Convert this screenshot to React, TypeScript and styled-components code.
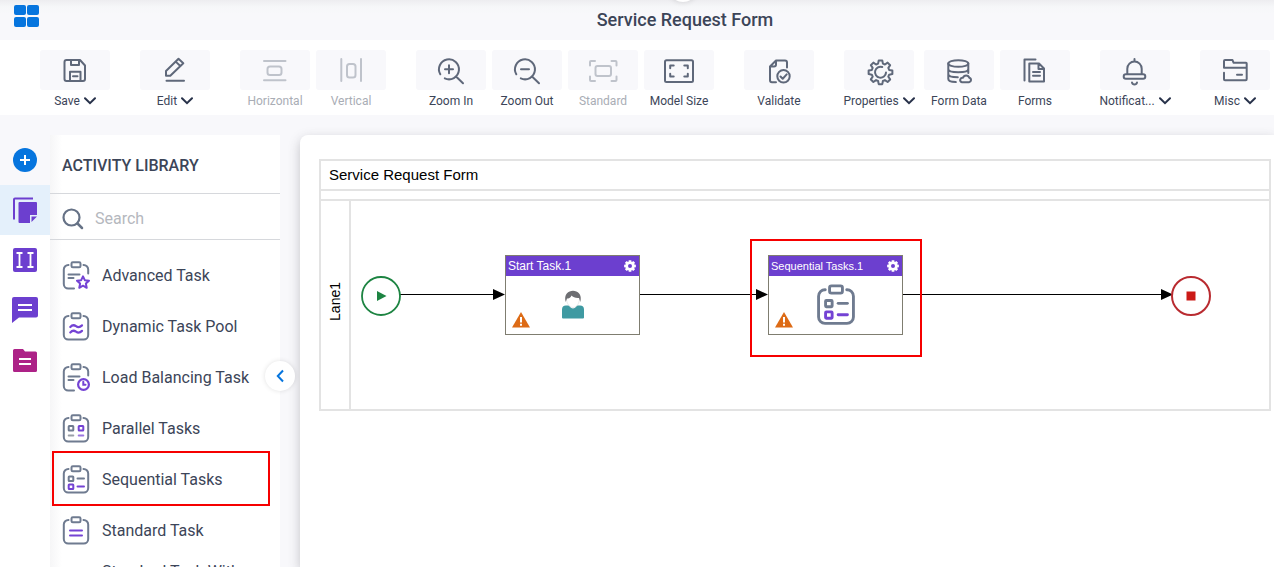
import React from "react";
import styled, { createGlobalStyle, css } from "styled-components";

const color = {
  ink: "#3c4558",
  icon: "#5f687a",
  muted: "#a9adb5",
  mutedIcon: "#bfc3cb",
  blue: "#0675de",
  purple: "#6c3fcf",
  magenta: "#ad2287",
  page: "#f8f8fb",
  rule: "#d6d8dc",
  frame: "#e3e3e3",
  mark: "#f60000",
};

const GlobalStyle = createGlobalStyle`
  * { box-sizing: border-box; }
  body { margin: 0; background: #fff; font-family: Roboto, "Liberation Sans", sans-serif; color: ${color.ink}; }
  button { font: inherit; color: inherit; border: 0; padding: 0; background: none; cursor: pointer; }
`;

const Page = styled.div`
  height: 100vh;
  display: flex;
  flex-direction: column;
  overflow: hidden;
  background: ${color.page};
`;

const Header = styled.header`
  position: relative;
  flex: none;
  height: 40px;
  display: grid;
  grid-template-columns: 1fr auto 1fr;
  padding: 0 14px;
  margin-right: -96px;
  background: linear-gradient(#ededf0, #f6f7f9 7px, ${color.page} 14px);
`;

const Title = styled.h1`
  margin: 0;
  font-size: 18px;
  line-height: 40px;
  font-weight: 500;
`;

const AppsButton = styled.button`
  justify-self: start;
  align-self: start;
  margin-top: 5px;
  display: grid;
  grid-template-columns: 12px 12px;
  grid-auto-rows: 10px;
  gap: 2px 1px;
  span { background: ${color.blue}; border-radius: 2px; }
`;

const PullTab = styled.span`
  position: absolute;
  top: -28px;
  left: 50%;
  width: 30px;
  height: 30px;
  margin-left: -17px;
  border-radius: 50%;
  background: #fff;
  box-shadow: 0 1px 5px rgba(0, 0, 0, 0.1);
`;

const Toolbar = styled.nav`
  flex: none;
  height: 75px;
  display: flex;
  gap: 30px;
  padding: 10px 0 0 40px;
  background: #fff;
`;

const ToolGroup = styled.div`
  display: flex;
  align-items: flex-start;
  gap: 6px;
`;

const ToolButton = styled.button<{ $wide?: boolean }>`
  width: 70px;
  margin-right: ${(p) => (p.$wide ? 4 : 0)}px;
  display: flex;
  flex-direction: column;
  align-items: center;
  color: ${color.icon};
  &:disabled { color: ${color.mutedIcon}; cursor: default; }
`;

const Tile = styled.span`
  width: 70px;
  height: 40px;
  display: grid;
  place-items: center;
  border-radius: 3px;
  background: ${color.page};
`;

const ToolLabel = styled.span<{ $muted?: boolean }>`
  display: flex;
  align-items: center;
  gap: 4px;
  margin-top: 4px;
  font-size: 12px;
  line-height: 14px;
  white-space: nowrap;
  color: ${(p) => (p.$muted ? color.muted : color.ink)};
`;

const Workspace = styled.div`
  flex: 1;
  min-height: 0;
  display: flex;
  padding-top: 20px;
`;

const Rail = styled.nav`
  width: 50px;
  flex: none;
  display: flex;
  flex-direction: column;
  &::after { content: ""; flex: 1; background: #fff; }
`;

const RailButton = styled.button<{ $tone: "plain" | "active" | "white" }>`
  height: 50px;
  display: grid;
  place-items: center;
  background: ${(p) => ({ plain: "transparent", active: "#e4f0fb", white: "#fff" })[p.$tone]};
`;

const Library = styled.aside`
  position: relative;
  width: 230px;
  flex: none;
  display: flex;
  flex-direction: column;
  background: linear-gradient(90deg, #f6f6f7, #fff 12px);
`;

const LibraryTitle = styled.h2`
  margin: 0;
  padding: 0 12px;
  font-size: 16px;
  font-weight: 500;
  line-height: 62px;
  height: 59px;
  border-bottom: 1px solid ${color.rule};
`;

const SearchBar = styled.label`
  height: 46px;
  flex: none;
  display: flex;
  align-items: center;
  gap: 11px;
  padding: 4px 12px 0;
  border-bottom: 1px solid ${color.rule};
`;

const SearchInput = styled.input`
  flex: 1;
  min-width: 0;
  border: 0;
  outline: 0;
  padding: 0;
  background: none;
  font: 400 16px/20px Roboto, "Liberation Sans", sans-serif;
  color: ${color.ink};
  &::placeholder { color: #b5b8be; opacity: 1; }
`;

const ActivityList = styled.ul`
  flex: 1;
  min-height: 0;
  margin: 0;
  padding: 10px 0 0;
  list-style: none;
  overflow: hidden;
`;

const Activity = styled.li<{ $marked?: boolean }>`
  position: relative;
  height: 51px;
  ${(p) =>
    p.$marked &&
    css`
      &::after {
        content: "";
        position: absolute;
        inset: -3px 10px -1px 2px;
        border: 2px solid ${color.mark};
        pointer-events: none;
      }
    `}
`;

const ActivityButton = styled.button`
  width: 100%;
  height: 100%;
  display: flex;
  align-items: center;
  gap: 12px;
  padding: 0 24px 0 12px;
  font-size: 16px;
  line-height: 20px;
  text-align: left;
  svg { flex: none; }
`;

const CollapseButton = styled.button`
  position: absolute;
  top: 226px;
  right: -15px;
  width: 30px;
  height: 30px;
  display: grid;
  place-items: center;
  border-radius: 50%;
  background: #fff;
  box-shadow: 0 0 5px rgba(0, 0, 0, 0.12);
  z-index: 1;
`;

const Canvas = styled.main`
  flex: 1;
  min-width: 0;
  margin-left: 20px;
  padding: 24px 3px 0 19px;
  border-top-left-radius: 8px;
  background: #fff;
  box-shadow: 0 4px 12px rgba(60, 60, 70, 0.28);
`;

const Pool = styled.section`
  position: relative;
  border: 2px solid ${color.frame};
  font-family: "Liberation Sans", Arial, sans-serif;
  color: #000;
`;

const PoolTitle = styled.h3`
  margin: 0;
  height: 28px;
  padding-left: 8px;
  font-size: 15px;
  line-height: 28px;
  font-weight: 400;
`;

const PhaseBar = styled.div`
  height: 12px;
  border: solid ${color.frame};
  border-width: 2px 0;
`;

const Lane = styled.div`
  height: 208px;
`;

const LaneName = styled.div`
  width: 30px;
  height: 100%;
  display: grid;
  place-items: center;
  padding-bottom: 8px;
  border-right: 2px solid ${color.frame};
  font-size: 14px;
  span { writing-mode: vertical-rl; transform: rotate(180deg); line-height: 20px; }
`;

const Connectors = styled.svg`
  position: absolute;
  left: 0;
  top: 0;
  pointer-events: none;
`;

const Node = styled.article<{ $x: number; $y: number }>`
  position: absolute;
  left: ${(p) => p.$x}px;
  top: ${(p) => p.$y}px;
  width: 135px;
  height: 80px;
  display: flex;
  flex-direction: column;
  border: 1px solid #7f7d70;
  background: #fff;
`;

const NodeHeader = styled.header<{ $small?: boolean }>`
  height: 20px;
  display: flex;
  align-items: center;
  justify-content: space-between;
  padding: 0 3px 0 2px;
  background: ${color.purple};
  color: #fff;
  font-size: ${(p) => (p.$small ? 11 : 12)}px;
  button { display: grid; }
`;

const NodeBody = styled.div`
  flex: 1;
  display: grid;
  place-items: center;
`;

const Warning = styled.svg`
  position: absolute;
  left: 6px;
  bottom: 6px;
`;

const Mark = styled.div<{ $x: number; $y: number }>`
  position: absolute;
  left: ${(p) => p.$x}px;
  top: ${(p) => p.$y}px;
  width: 172px;
  height: 118px;
  border: 2px solid ${color.mark};
  pointer-events: none;
`;

/* Builds a toothed wheel outline around (cx, cy). */
function gearPath(cx: number, cy: number, outer: number, inner: number, topHalf: number, baseHalf: number) {
  const pts: string[] = [];
  for (let i = 0; i < 8; i++) {
    const a = (i * Math.PI) / 4;
    const at = (r: number, d: number) =>
      `${(cx + r * Math.cos(a + d)).toFixed(2)} ${(cy + r * Math.sin(a + d)).toFixed(2)}`;
    pts.push(at(inner, -baseHalf), at(outer, -topHalf), at(outer, topHalf), at(inner, baseHalf));
  }
  return `M${pts.join("L")}z`;
}

const toolIcons: Record<string, React.ReactNode> = {
  save: (
    <>
      <path d="M7.5 6H21l5 5.5V25a2 2 0 0 1-2 2H7.5a2 2 0 0 1-2-2V8a2 2 0 0 1 2-2z" />
      <path d="M12 6v5h8V6M11 27v-9.3h10.5V27M14 22.3h4.5" />
    </>
  ),
  edit: <path d="M7.500 26.7h17.500M7 21.7V17L19.5 4.8l4.8 4.4-13 12.5zM16.7 7.6l4.6 4.4" />,
  horizontal: (
    <>
      <path d="M5 7h21.500M5 26.300h21.500" />
      <rect x="8.500" y="12.500" width="14" height="8.500" rx="2.500" />
    </>
  ),
  vertical: (
    <>
      <path d="M6.300 5v22M26 5v22" />
      <rect x="12" y="10" width="8.500" height="13.500" rx="2.500" />
    </>
  ),
  zoomIn: <path d="M5.3 20.3A10 10 0 1 1 9.800 24.400M21.300 22.700l6.700 6.500M10 15.300h8M14 11.300v8" />,
  zoomOut: <path d="M5.3 20.3A10 10 0 1 1 9.800 24.400M21.300 22.700l6.700 6.500M10 15.300h8" />,
  standard: (
    <>
      <path d="M3 11.500V8q0-1 1-1h4M24.500 7h4q1 0 1 1v3.500M29.500 22.500V26q0 1-1 1h-4M8 27H4q-1 0-1-1v-3.500" />
      <rect x="8.500" y="12" width="15.500" height="10" rx="2" />
    </>
  ),
  modelSize: (
    <>
      <rect x="2" y="6.300" width="28" height="21.700" rx="1.500" />
      <path d="M7.200 14.300v-2.800h3.500M21.300 11.500h3.500v2.800M24.800 19.700v2.800h-3.500M10.700 22.500H7.200v-2.800" />
    </>
  ),
  validate: (
    <>
      <path d="M13 28.300H9a2 2 0 0 1-2-2V12.500l6-6h9a2 2 0 0 1 2 2V13.500M7.500 12.500h3.500a2 2 0 0 0 2-2V7" />
      <circle cx="20.500" cy="22.300" r="6.200" />
      <path d="M17.500 22.500l2.200 2.200 4-4.300" />
    </>
  ),
  properties: (
    <>
      <path strokeLinejoin="round" d={gearPath(17.5, 18.3, 12, 9, 0.15, 0.27)} />
      <path d="M19.300 13A5.500 5.500 0 1 0 23 18.600" />
    </>
  ),
  formData: (
    <>
      <ellipse cx="15.300" cy="9.500" rx="10" ry="3.300" />
      <path d="M5.300 9.500V25c0 1.700 3 2.900 7.500 3.100M25.300 9.500v9.500M5.300 15c0 4.300 20 4.300 20 0M5.300 20c0 2 4 3.200 9.500 3.200" />
      <path d="M19 28.300h7a2.300 2.300 0 0 0 .3-4.500 3.300 3.300 0 0 0-6.300 0 2.300 2.300 0 0 0-1 4.500z" />
    </>
  ),
  forms: <path d="M5.500 26.500V5.500h11M10.300 9.500h9.700l5 5v13H10.300zM19.500 9.700v5.300h5.500M14 18h7M14 21.700h7" />,
  bell: (
    <>
      <path d="M15.500 5v2.300M8.300 20v-5.300a7.200 7.200 0 0 1 14.400 0V20M13 28.500q.500 2 2.500 2t2.500-2" />
      <rect x="4.700" y="20.300" width="21.600" height="4.400" rx="2.200" />
    </>
  ),
  folder: <path d="M5 13.700V7q0-1 1-1h7.500l1 2.700H27q.7 0 .7.800V25q0 1.200-1 1.200H6q-1 0-1-1v-6.500M5 13.700h22.700M18 20.700h5" />,
};

const ToolIcon = ({ name }: { name: string }) => (
  <svg width="32" height="32" viewBox="0 0 32 32" fill="none" stroke="currentColor" strokeWidth="2" strokeLinecap="round" strokeLinejoin="round" aria-hidden="true">
    {toolIcons[name]}
  </svg>
);

const Chevron = () => (
  <svg width="12" height="8" viewBox="0 0 12 8" fill="none" stroke="#28324a" strokeWidth="2" strokeLinecap="round" aria-hidden="true">
    <path d="M1 1.200l5 5 5-5" />
  </svg>
);

type Glyph = "star" | "waves" | "clock" | "parallel" | "sequential" | "standard";
const grey = "#6f7b90";
const violet = "#7443d4";

const glyphs: Record<Glyph, React.ReactNode> = {
  star: (
    <>
      <path d="M6.500 14.500h11M6.500 18h5" />
      <path stroke={violet} strokeLinejoin="round" d="M21 16.300l1.800 3.900 4.200.5-3.100 2.900.8 4.200-3.700-2.100-3.700 2.100.8-4.200-3.100-2.900 4.200-.5z" />
    </>
  ),
  waves: <path stroke={violet} strokeWidth="2.200" d="M8.300 16q2.700-3 5.700-.800t6-.800M8.300 21.500q2.700-3 5.700-.800t6-.800" />,
  clock: (
    <>
      <path d="M6.500 14.500h11M6.500 18h5" />
      <circle cx="21.500" cy="22.500" r="5.400" stroke={violet} strokeWidth="2.200" />
      <path stroke={violet} d="M21.300 19.800v3h2.200" />
    </>
  ),
  parallel: (
    <>
      <rect x="6.700" y="13" width="4.600" height="4.600" rx=".5" />
      <path strokeWidth="2" stroke="#9a9fa8" d="M6.700 22.500h4.600" />
      <rect x="16.700" y="13" width="4.600" height="4.600" rx=".5" stroke={violet} />
      <path strokeWidth="2" stroke="#9b76e2" d="M16.700 22.500h4.600" />
    </>
  ),
  sequential: (
    <>
      <rect x="6.700" y="12.500" width="4.600" height="4.400" rx=".5" />
      <path d="M15.500 14.500h6.500" />
      <rect x="6.700" y="20.500" width="4.600" height="4.400" rx=".5" stroke={violet} />
      <path stroke={violet} d="M15.500 22.500h6.500" />
    </>
  ),
  standard: <path stroke={violet} strokeWidth="2" d="M8 15.500h12M8 20.500h12" />,
};

const Clipboard = ({ glyph, large }: { glyph: Glyph; large?: boolean }) => {
  const cut = glyph === "star" || glyph === "clock";
  return (
    <svg width={large ? 40 : 28} height={large ? 43 : 30} viewBox="0 1 28 30" fill="none" stroke={grey} strokeWidth="2" strokeLinecap="round" aria-hidden="true">
      <rect x="9.500" y="2.300" width="9" height="5" rx="1.300" />
      <path
        d={
          cut
            ? "M6.500 5a4.500 4.500 0 0 0-4.700 4.500v14.500a4.500 4.500 0 0 0 4.500 4.500H12M21.500 5a4.500 4.500 0 0 1 4.700 4.500v4"
            : "M6.500 5a4.500 4.500 0 0 0-4.700 4.500v14.500a4.500 4.500 0 0 0 4.500 4.500h15.400a4.500 4.500 0 0 0 4.500-4.500V9.500a4.500 4.500 0 0 0-4.700-4.500"
        }
      />
      {glyphs[glyph]}
    </svg>
  );
};

const railItems: { label: string; tone: "plain" | "active" | "white"; art: React.ReactNode }[] = [
  {
    label: "Add",
    tone: "plain",
    art: (
      <>
        <circle cx="14" cy="14" r="12" fill={color.blue} />
        <path d="M14 9v10M9 14h10" stroke="#fff" strokeWidth="2" />
      </>
    ),
  },
  {
    label: "Activity library",
    tone: "active",
    art: (
      <>
        <path d="M3 23.500V3.500q0-1 1-1H22" fill="none" stroke={color.purple} strokeWidth="2" />
        <path d="M8.500 6H25q1 0 1 1v12h-7v8H8.500q-1 0-1-1V7q0-1 1-1zM20.500 20.500H26L20.500 26z" fill={color.purple} />
      </>
    ),
  },
  {
    label: "Fields",
    tone: "white",
    art: (
      <>
        <rect x="2" y="2" width="24" height="24" rx="2" fill={color.purple} />
        <path d="M8.500 7v14M19.500 7v14M5.500 7h6M16.500 7h6M5.500 21h6M16.500 21h6" stroke="#fff" strokeWidth="1.800" />
      </>
    ),
  },
  {
    label: "Comments",
    tone: "white",
    art: (
      <>
        <path d="M3 1h22q2 0 2 2v16.500q0 2-2 2H8L1 27V3q0-2 2-2z" fill={color.purple} />
        <path d="M7 9h14M7 14h14" stroke="#fff" strokeWidth="2" />
      </>
    ),
  },
  {
    label: "Documents",
    tone: "white",
    art: (
      <>
        <path d="M3.500 3H12l2 2.500h10.500q1.500 0 1.500 1.500v17.500q0 1.500-1.500 1.500h-21Q2 26 2 24.500v-20Q2 3 3.500 3z" fill={color.magenta} />
        <path d="M8 13h12M8 18h12" stroke="#fff" strokeWidth="2" />
      </>
    ),
  },
];

type Tool = { label: string; icon: string; menu?: boolean; off?: boolean; wide?: boolean };
const toolGroups: Tool[][] = [
  [{ label: "Save", icon: "save", menu: true }],
  [{ label: "Edit", icon: "edit", menu: true }],
  [
    { label: "Horizontal", icon: "horizontal", off: true },
    { label: "Vertical", icon: "vertical", off: true },
  ],
  [
    { label: "Zoom In", icon: "zoomIn" },
    { label: "Zoom Out", icon: "zoomOut" },
    { label: "Standard", icon: "standard", off: true },
    { label: "Model Size", icon: "modelSize" },
  ],
  [{ label: "Validate", icon: "validate" }],
  [
    { label: "Properties", icon: "properties", menu: true, wide: true },
    { label: "Form Data", icon: "formData" },
    { label: "Forms", icon: "forms" },
  ],
  [{ label: "Notificat...", icon: "bell", menu: true }],
  [{ label: "Misc", icon: "folder", menu: true }],
];

const activities: { label: string; glyph: Glyph; marked?: boolean }[] = [
  { label: "Advanced Task", glyph: "star" },
  { label: "Dynamic Task Pool", glyph: "waves" },
  { label: "Load Balancing Task", glyph: "clock" },
  { label: "Parallel Tasks", glyph: "parallel" },
  { label: "Sequential Tasks", glyph: "sequential", marked: true },
  { label: "Standard Task", glyph: "standard" },
  { label: "Standard Task With Notification", glyph: "standard" },
];

const NodeGear = () => (
  <svg width="12" height="12" viewBox="0 0 12 12" aria-hidden="true">
    <path fill="#fff" fillRule="evenodd" d={`${gearPath(6, 6, 6, 4.6, 0.22, 0.32)}M6 4a2 2 0 1 0 0 4 2 2 0 1 0 0-4z`} />
  </svg>
);

const Person = () => (
  <svg width="24" height="30" viewBox="0 0 24 30" aria-hidden="true">
    <path d="M1 27.500V19.500q0-4 4-4h3q4 6 8 0h3q4 0 4 4v8q0 1-1 1H2q-1 0-1-1z" fill="#3f9aa2" />
    <path d="M5.500 8.500c0 5 3 9 6.500 9s6.500-4 6.500-9L15 5H8z" fill="#fff" stroke="#dcdcde" strokeWidth=".6" />
    <path d="M4.700 12C2.500 4 7.500.7 12 .7S21.500 4 19.300 12l-1.300-4c-3.500.3-6-.8-7.500-2.500C9.700 8 7.500 8.500 6 8.500z" fill="#6d6e72" />
  </svg>
);

const WarningSign = () => (
  <Warning width="18" height="16" viewBox="0 0 18 16" role="img" aria-label="Warning">
    <path d="M9 0l9 15.500H0z" fill="#dd6b16" />
    <path d="M9 5v5.500M9 11.800v2" stroke="#fff" strokeWidth="2" />
  </Warning>
);

function TaskNode({ title, x, small, children }: { title: string; x: number; small?: boolean; children: React.ReactNode }) {
  return (
    <Node $x={x} $y={94}>
      <NodeHeader $small={small}>
        {title}
        <button aria-label={`${title} settings`}>
          <NodeGear />
        </button>
      </NodeHeader>
      <NodeBody>{children}</NodeBody>
      <WarningSign />
    </Node>
  );
}

export default function App() {
  return (
    <Page>
      <GlobalStyle />
      <Header>
        <AppsButton aria-label="Apps">
          <span />
          <span />
          <span />
          <span />
        </AppsButton>
        <Title>Service Request Form</Title>
        <PullTab />
      </Header>

      <Toolbar>
        {toolGroups.map((group) => (
          <ToolGroup key={group[0].label}>
            {group.map((t) => (
              <ToolButton key={t.label} disabled={t.off} $wide={t.wide}>
                <Tile>
                  <ToolIcon name={t.icon} />
                </Tile>
                <ToolLabel $muted={t.off}>
                  {t.label}
                  {t.menu && <Chevron />}
                </ToolLabel>
              </ToolButton>
            ))}
          </ToolGroup>
        ))}
      </Toolbar>

      <Workspace>
        <Rail>
          {railItems.map((r) => (
            <RailButton key={r.label} $tone={r.tone} aria-label={r.label}>
              <svg width="28" height="28" viewBox="0 0 28 28" aria-hidden="true">
                {r.art}
              </svg>
            </RailButton>
          ))}
        </Rail>

        <Library>
          <LibraryTitle>ACTIVITY LIBRARY</LibraryTitle>
          <SearchBar>
            <svg width="22" height="22" viewBox="0 0 22 22" fill="none" stroke="#667286" strokeWidth="2.200" strokeLinecap="round" aria-hidden="true">
              <circle cx="9.500" cy="9.500" r="8" />
              <path strokeWidth="2.500" d="M15.500 15.500l4.500 4.500" />
            </svg>
            <SearchInput type="search" placeholder="Search" aria-label="Search" />
          </SearchBar>
          <ActivityList>
            {activities.map((a) => (
              <Activity key={a.label} $marked={a.marked}>
                <ActivityButton>
                  <Clipboard glyph={a.glyph} />
                  {a.label}
                </ActivityButton>
              </Activity>
            ))}
          </ActivityList>
          <CollapseButton aria-label="Collapse panel">
            <svg width="8" height="14" viewBox="0 0 8 14" fill="none" stroke={color.blue} strokeWidth="2" aria-hidden="true">
              <path d="M7 1.500L1.800 7 7 12.500" />
            </svg>
          </CollapseButton>
        </Library>

        <Canvas>
          <Pool>
            <PoolTitle>Service Request Form</PoolTitle>
            <PhaseBar />
            <Lane>
              <LaneName>
                <span>Lane1</span>
              </LaneName>
            </Lane>
            <Connectors width="900" height="200" viewBox="1 1 900 200" aria-hidden="true">
              <g stroke="#000" strokeWidth="1">
                <path d="M80 134.500h100M320 134.500h120M583 134.500h262" />
              </g>
              <path d="M173 129l12 5.500-12 5.500zM436 129l12 5.500-12 5.500zM841 129l12 5.500-12 5.500z" />
              <circle cx="61" cy="136" r="19" fill="none" stroke="#1d8442" strokeWidth="1.800" />
              <path d="M57 131l9.500 5-9.500 5z" fill="#1d8442" />
              <circle cx="871" cy="136" r="19" fill="none" stroke="#b92b30" strokeWidth="2" />
              <rect x="866.500" y="131.500" width="9" height="9" fill="#cb1a17" />
            </Connectors>
            <TaskNode title="Start Task.1" x={184}>
              <Person />
            </TaskNode>
            <TaskNode title="Sequential Tasks.1" x={447} small>
              <Clipboard glyph="sequential" large />
            </TaskNode>
            <Mark $x={429} $y={78} />
          </Pool>
        </Canvas>
      </Workspace>
    </Page>
  );
}
